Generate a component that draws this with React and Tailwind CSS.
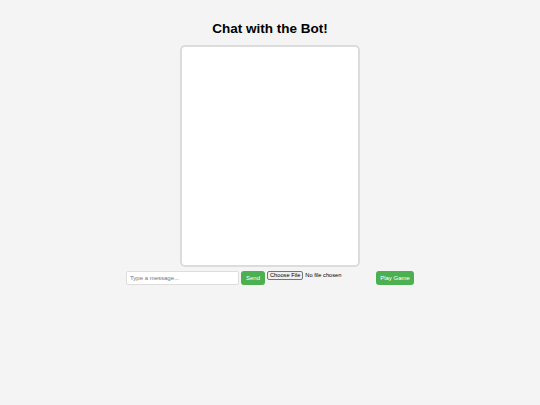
import React from 'react';

export default function App() {
  return (
    <div className="min-h-[405px] w-full bg-[#f4f4f4] flex flex-col items-center font-['Liberation_Sans',Arial,sans-serif] text-black">
      <h1 className="mt-[21px] text-[13.5px] leading-[16px] font-bold">Chat with the Bot!</h1>

      {/* Chat log */}
      <div className="mt-[8px] w-[180px] h-[222px] bg-white border-2 border-[#dcdcdc] rounded-[5px]"></div>

      {/* Controls */}
      <div className="mt-[4px] flex items-start">
        <input
          type="text"
          placeholder="Type a message..."
          className="w-[113px] h-[14px] bg-white border border-[#ddd] rounded-[2px] px-[3px] text-[6px] outline-none placeholder:text-[#757575]"
        />
        <button className="ml-[2px] w-[24px] h-[14px] bg-[#4caf50] text-white text-[6px] rounded-[3px]">Send</button>
        <div className="ml-[2px] w-[107px] flex items-center">
          <span className="h-[9px] px-[2px] flex items-center bg-[#efefef] border border-[#767676] rounded-[2px] text-[5.7px] leading-none">Choose File</span>
          <span className="ml-[2px] text-[5.7px] leading-none">No file chosen</span>
        </div>
        <button className="ml-[2px] w-[38px] h-[14px] bg-[#4caf50] text-white text-[6px] rounded-[3px]">Play Game</button>
      </div>
    </div>
  );
}
